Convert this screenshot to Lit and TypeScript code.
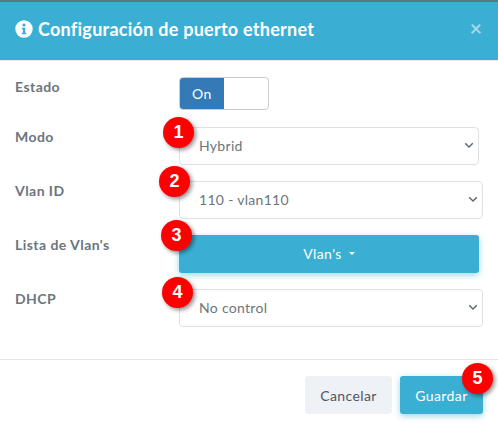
import { LitElement, html, css } from "lit";
import { customElement } from "lit/decorators.js";

const chevron = html`<svg class="chev" width="10" height="7" viewBox="0 0 10 7"><path d="M1.2 1.2 5 5 8.8 1.2" fill="none" stroke="#5b6670" stroke-width="1.4"/></svg>`;

@customElement("app-root")
export class AppRoot extends LitElement {
  static styles = css`
    :host { display: block; width: 498px; height: 429px; position: relative; overflow: hidden; background: #fff;
      font-family: Lato, "Open Sans", sans-serif; font-size: 14px; color: #6c757d; }
    .strip { height: 2px; background: #5f7488; }
    .head { height: 59px; box-sizing: border-box; background: #3aafd3; color: #fff; display: flex; align-items: center; padding: 0 16px 4px 15px; gap: 5px; border-bottom: 1px solid #e9edf0; }
    .head h1 { margin: 0; font-size: 18px; font-weight: 700; letter-spacing: .26px; flex: 1; }
    .close { color: #a5d8e9; font-size: 21px; line-height: 1; font-weight: 700; margin-top: -3px; }
    .body { padding: 16px 15px 32px 16px; display: flex; flex-direction: column; gap: 16px; border-bottom: 1px solid #e4e6e8; }
    .row { display: grid; grid-template-columns: 163px 1fr; }
    .row label { font-weight: 700; font-size: 14px; letter-spacing: .45px; color: #6c757d; margin-left: -1px; padding-top: 1px; }
    .row.first { margin-bottom: 1px; }
    .toggle { width: 90px; height: 33px; box-sizing: border-box; border: 1px solid #ccc; border-radius: 4px; display: flex; overflow: hidden; }
    .toggle span { width: 44px; background: #337ab7; color: #fff; display: flex; align-items: center; justify-content: center; font-size: 14px; letter-spacing: .5px; }
    .sel { height: 38px; box-sizing: border-box; border: 1px solid #dee2e6; border-radius: 4px; display: flex; align-items: center; justify-content: space-between; padding: 0 4px 2px 19px; font-size: 14px; letter-spacing: .3px; background: #fff; color: #6c757d; }
    .short { width: 300px; }
    .btn { height: 38px; box-sizing: border-box; border-radius: 3px; background: #3aafd3; color: #fff; display: flex; align-items: center; justify-content: center; gap: 7px; padding-bottom: 2px; font-size: 14px; letter-spacing: .4px; box-shadow: 0 2px 6px rgba(58,175,211,.5); }
    .caret { width: 0; height: 0; border-left: 3.5px solid transparent; border-right: 3.5px solid transparent; border-top: 3.5px solid #fff; }
    .foot { display: flex; justify-content: flex-end; gap: 8px; padding: 16px 15px 0 0; }
    .foot div { height: 38px; display: flex; align-items: center; justify-content: center; border-radius: 3px; font-size: 14px; letter-spacing: .4px; }
    .cancel { width: 87px; background: #eef1f6; color: #4e5661; }
    .save { width: 83px; background: #3aafd3; color: #fff; box-shadow: 0 2px 6px rgba(58,175,211,.5); }
    .badge { position: absolute; width: 31px; height: 31px; border-radius: 50%; background: #fe0000; color: #fff; font-size: 18px; font-weight: 700; display: flex; align-items: center; justify-content: center; box-shadow: 2px 2px 4px rgba(0,0,0,.45); font-family: "Liberation Sans", sans-serif; }
    .b1 { left: 163px; top: 117px; }
    .b2 { left: 159px; top: 166px; }
    .b3 { left: 161px; top: 220px; }
    .b4 { left: 162px; top: 277px; }
    .b5 { left: 462px; top: 363px; }
  `;

  render() {
    return html`
      <div class="strip"></div>
      <div class="head">
        <svg width="18" height="18" viewBox="0 0 18 18">
          <circle cx="9" cy="9" r="8.7" fill="#fff"/>
          <circle cx="9" cy="5" r="1.6" fill="#3aafd3"/>
          <path d="M6.8 7.7h3.4v5.1h1.1v1.5H6.8v-1.5h1.1V9.2H6.8z" fill="#3aafd3"/>
        </svg>
        <h1>Configuración de puerto ethernet</h1>
        <span class="close">×</span>
      </div>
      <div class="body">
        <div class="row first"><label>Estado</label><div class="toggle"><span>On</span></div></div>
        <div class="row"><label>Modo</label><div class="sel short">Hybrid ${chevron}</div></div>
        <div class="row"><label>Vlan ID</label><div class="sel">110 - vlan110 ${chevron}</div></div>
        <div class="row"><label>Lista de Vlan's</label><div class="btn short">Vlan's <i class="caret"></i></div></div>
        <div class="row"><label>DHCP</label><div class="sel">No control ${chevron}</div></div>
      </div>
      <div class="foot"><div class="cancel">Cancelar</div><div class="save">Guardar</div></div>
      <div class="badge b1">1</div>
      <div class="badge b2">2</div>
      <div class="badge b3">3</div>
      <div class="badge b4">4</div>
      <div class="badge b5">5</div>
    `;
  }
}
